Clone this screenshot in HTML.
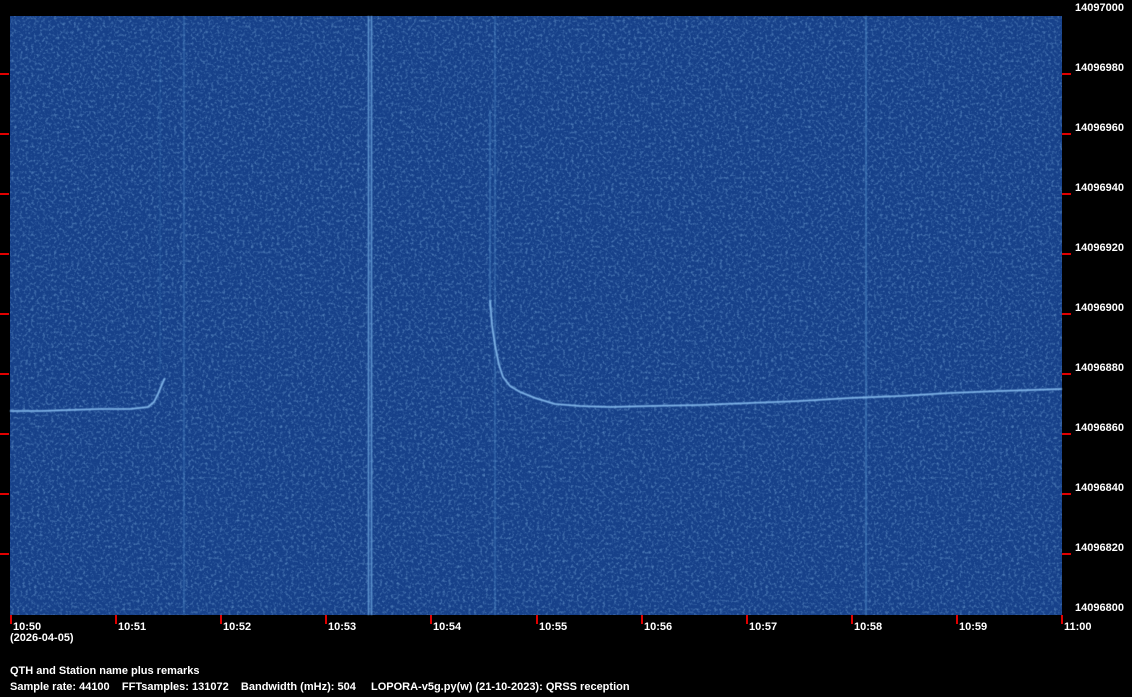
<!DOCTYPE html>
<html><head><meta charset="utf-8"><style>
html,body{margin:0;padding:0;background:#000;width:1132px;height:697px;overflow:hidden}
svg{display:block}
text{font-family:"Liberation Sans",sans-serif;font-weight:bold;font-size:11px;fill:#fff}
</style></head><body>
<svg width="1132" height="697" xmlns="http://www.w3.org/2000/svg">
<defs>
<filter id="n" x="0" y="0" width="100%" height="100%">
<feTurbulence type="fractalNoise" baseFrequency="0.35" numOctaves="2" seed="3" result="t"/>
<feColorMatrix type="matrix" values="0 0 0 0 0.16  0 0 0 0 0.36  0 0 0 0 0.66  0 0 0 2.0 -0.95"/>
</filter>
<filter id="b"><feGaussianBlur stdDeviation="0.6"/></filter>
</defs>
<rect x="10" y="16" width="1052" height="599" fill="#17418a"/>
<rect x="10" y="16" width="1052" height="599" filter="url(#n)" opacity="0.7"/>
<g stroke="#4f8ac8" fill="none" filter="url(#b)">
<line x1="184" y1="16" x2="184" y2="615" stroke-width="1.5" opacity="0.5"/>
<line x1="368.5" y1="16" x2="368.5" y2="615" stroke-width="1.5" stroke="#5f95d0"/>
<line x1="371.5" y1="16" x2="371.5" y2="615" stroke-width="1.5" stroke="#5f95d0"/>
<line x1="495" y1="16" x2="495" y2="615" stroke-width="1.5" opacity="0.5"/>
<line x1="866" y1="16" x2="866" y2="615" stroke-width="1.5" opacity="0.7"/>
<line x1="160" y1="60" x2="160" y2="370" stroke-width="1" opacity="0.3"/>
<line x1="490" y1="110" x2="490" y2="310" stroke-width="1.5" opacity="0.6"/>
</g>
<g stroke="#7fb4e8" fill="none" stroke-width="1.8" filter="url(#b)">
<polyline points="10,411 40,411 70,410 100,409 130,409 148,407 154,402 158,394 163,382 165,378"/>
<polyline points="490,300 492,325 495,345 499,365 503,377 510,386 520,392 535,398 555,404 580,406 610,407 650,406 700,405 750,403 800,401 850,398 900,396 950,393 1000,391 1062,389"/>
</g>
<g fill="#e00000">
<rect x="1062" y="73" width="9" height="2"/><rect x="0" y="73" width="9" height="2"/>
<rect x="1062" y="133" width="9" height="2"/><rect x="0" y="133" width="9" height="2"/>
<rect x="1062" y="193" width="9" height="2"/><rect x="0" y="193" width="9" height="2"/>
<rect x="1062" y="253" width="9" height="2"/><rect x="0" y="253" width="9" height="2"/>
<rect x="1062" y="313" width="9" height="2"/><rect x="0" y="313" width="9" height="2"/>
<rect x="1062" y="373" width="9" height="2"/><rect x="0" y="373" width="9" height="2"/>
<rect x="1062" y="433" width="9" height="2"/><rect x="0" y="433" width="9" height="2"/>
<rect x="1062" y="493" width="9" height="2"/><rect x="0" y="493" width="9" height="2"/>
<rect x="1062" y="553" width="9" height="2"/><rect x="0" y="553" width="9" height="2"/>
<rect x="10" y="615" width="2" height="9"/><rect x="115" y="615" width="2" height="9"/>
<rect x="220" y="615" width="2" height="9"/><rect x="325" y="615" width="2" height="9"/>
<rect x="430" y="615" width="2" height="9"/><rect x="536" y="615" width="2" height="9"/>
<rect x="641" y="615" width="2" height="9"/><rect x="746" y="615" width="2" height="9"/>
<rect x="851" y="615" width="2" height="9"/><rect x="956" y="615" width="2" height="9"/>
<rect x="1061" y="615" width="2" height="9"/>
</g>
<g>
<text x="1075" y="11">14097000</text>
<text x="1075" y="71">14096980</text>
<text x="1075" y="131">14096960</text>
<text x="1075" y="191">14096940</text>
<text x="1075" y="251">14096920</text>
<text x="1075" y="311">14096900</text>
<text x="1075" y="371">14096880</text>
<text x="1075" y="431">14096860</text>
<text x="1075" y="491">14096840</text>
<text x="1075" y="551">14096820</text>
<text x="1075" y="611">14096800</text>
<text x="13" y="630">10:50</text><text x="118" y="630">10:51</text>
<text x="223" y="630">10:52</text><text x="328" y="630">10:53</text>
<text x="433" y="630">10:54</text><text x="539" y="630">10:55</text>
<text x="644" y="630">10:56</text><text x="749" y="630">10:57</text>
<text x="854" y="630">10:58</text><text x="959" y="630">10:59</text>
<text x="1064" y="630">11:00</text>
<text x="10" y="641">(2026-04-05)</text>
<text x="10" y="674">QTH and Station name plus remarks</text>
<text x="10" y="690" xml:space="preserve">Sample rate: 44100    FFTsamples: 131072    Bandwidth (mHz): 504</text>
<text x="371" y="690">LOPORA-v5g.py(w) (21-10-2023): QRSS reception</text>
</g>
</svg>
</body></html>
